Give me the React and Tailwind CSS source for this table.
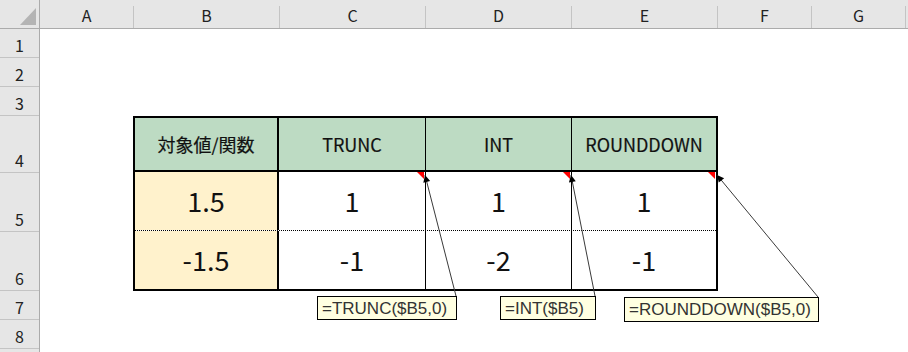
import React from 'react';

const cols = [
  { label: 'A', w: 'w-[93px]' },
  { label: 'B', w: 'w-[145px]' },
  { label: 'C', w: 'w-[145px]' },
  { label: 'D', w: 'w-[145px]' },
  { label: 'E', w: 'w-[145px]' },
  { label: 'F', w: 'w-[93px]' },
  { label: 'G', w: 'w-[93px]' },
];

const rows = [
  { n: 1, h: 'h-[29px]' },
  { n: 2, h: 'h-[29px]' },
  { n: 3, h: 'h-[29px]' },
  { n: 4, h: 'h-[57px]' },
  { n: 5, h: 'h-[59px]' },
  { n: 6, h: 'h-[59px]' },
  { n: 7, h: 'h-[29px]' },
  { n: 8, h: 'h-[29px]' },
];

const uiFont = { fontFamily: '"Noto Sans CJK JP", "Noto Sans", sans-serif' };

// comment arrows: tip at the cell corner, tail at the comment box
const arrows = [
  { x1: 425, y1: 175, x2: 456, y2: 296 },
  { x1: 571, y1: 175, x2: 595, y2: 296 },
  { x1: 717, y1: 175, x2: 818, y2: 297 },
];

function arrowHead({ x1, y1, x2, y2 }) {
  const dx = x2 - x1;
  const dy = y2 - y1;
  const len = Math.hypot(dx, dy);
  const ux = dx / len;
  const uy = dy / len;
  const bx = x1 + ux * 7;
  const by = y1 + uy * 7;
  const px = -uy * 3.5;
  const py = ux * 3.5;
  return `${x1},${y1} ${bx + px},${by + py} ${bx - px},${by - py}`;
}

function HeaderCell({ children, className = '' }) {
  return (
    <div className={`flex items-center justify-center pt-[1px] text-[18px] font-normal text-[#111] [-webkit-text-stroke:0.2px_#111] ${className}`}>
      {children}
    </div>
  );
}

function ValueCell({ children, className = '' }) {
  return (
    <div className={`flex items-center justify-center text-[27px] font-normal text-[#111] ${className}`}>
      {children}
    </div>
  );
}

function Comment({ text, className }) {
  return (
    <div
      className={`absolute flex items-center border border-black bg-[#ffffe1] pl-[4px] text-[17px] leading-none text-[#333] ${className}`}
      style={{ fontFamily: '"Liberation Sans", Arial, sans-serif' }}
    >
      {text}
    </div>
  );
}

export default function App() {
  return (
    <div className="relative w-[908px] h-[352px] overflow-hidden bg-white" style={uiFont}>
      {/* column headers */}
      <div className="flex h-[29px] bg-[#e6e6e6] border-b border-[#ababab]">
        <div className="w-[40px] h-full border-r border-[#ababab] flex items-end justify-end pr-[3px] pb-[3px]">
          <svg width="16" height="17" viewBox="0 0 16 17">
            <polygon points="16,0 16,17 0,17" fill="#b4b4b4" />
          </svg>
        </div>
        {cols.map((c) => (
          <React.Fragment key={c.label}>
            <div className={`${c.w} flex items-center justify-center pt-[1px] text-[16px] text-[#222]`}>{c.label}</div>
            <div className="w-px h-[22px] self-end bg-[#c4c4c4]" />
          </React.Fragment>
        ))}
        <div className="flex-1" />
      </div>

      <div className="flex">
        {/* row headers */}
        <div className="w-[40px] h-[323px] bg-[#e6e6e6] border-r border-[#ababab] flex flex-col">
          {rows.map((r) => (
            <div
              key={r.n}
              className={`${r.h} shrink-0 border-b border-[#c4c4c4] flex items-end justify-center pb-[2px] text-[16px] leading-5 text-[#222]`}
            >
              {r.n}
            </div>
          ))}
          <div className="flex-1" />
        </div>

        {/* sheet */}
        <div className="flex-1 bg-white">
          <div className="ml-[93px] mt-[87px] w-[585px] border-2 border-black flex flex-col">
            <div className="flex h-[54px] bg-[#bddbc3] border-b-2 border-black">
              <HeaderCell className="w-[144px] border-r-2 border-black">対象値/関数</HeaderCell>
              <HeaderCell className="w-[147px] border-r border-black">TRUNC</HeaderCell>
              <HeaderCell className="w-[146px] border-r border-black">INT</HeaderCell>
              <HeaderCell className="flex-1">ROUNDDOWN</HeaderCell>
            </div>
            <div className="flex h-[59px] border-b border-dotted border-black">
              <ValueCell className="w-[144px] border-r-2 border-black bg-[#fff2cc]">1.5</ValueCell>
              <ValueCell className="w-[147px] border-r border-black">1</ValueCell>
              <ValueCell className="w-[146px] border-r border-black">1</ValueCell>
              <ValueCell className="flex-1">1</ValueCell>
            </div>
            <div className="flex h-[58px]">
              <ValueCell className="w-[144px] border-r-2 border-black bg-[#fff2cc]">-1.5</ValueCell>
              <ValueCell className="w-[147px] border-r border-black">-1</ValueCell>
              <ValueCell className="w-[146px] border-r border-black">-2</ValueCell>
              <ValueCell className="flex-1">-1</ValueCell>
            </div>
          </div>
        </div>
      </div>

      {/* comment indicators and arrows */}
      <svg className="absolute left-0 top-0 pointer-events-none" width="908" height="352">
        <polygon points="417,172 424,172 424,179" fill="#ff0000" />
        <polygon points="563,172 570,172 570,179" fill="#ff0000" />
        <polygon points="708,172 715,172 715,179" fill="#ff0000" />
        {arrows.map((a, i) => (
          <g key={i}>
            <line x1={a.x1} y1={a.y1} x2={a.x2} y2={a.y2} stroke="#3a3a3a" strokeWidth="1" />
            <polygon points={arrowHead(a)} fill="#000" />
          </g>
        ))}
      </svg>

      <Comment text="=TRUNC($B5,0)" className="left-[317px] top-[296px] w-[140px] h-[24px]" />
      <Comment text="=INT($B5)" className="left-[500px] top-[296px] w-[96px] h-[24px]" />
      <Comment text="=ROUNDDOWN($B5,0)" className="left-[624px] top-[297px] w-[195px] h-[25px]" />
    </div>
  );
}
